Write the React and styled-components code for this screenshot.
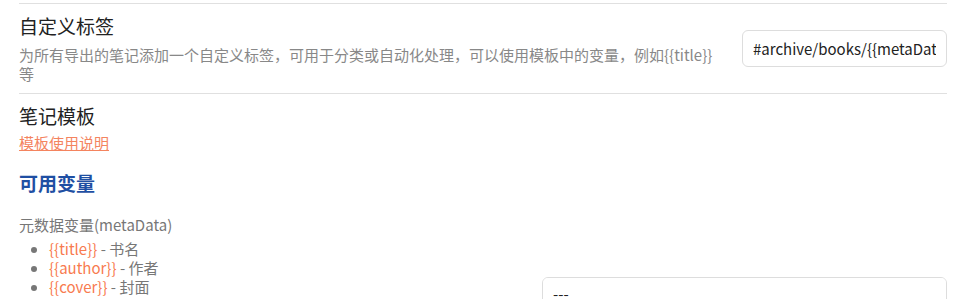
import React from 'react';
import styled, { createGlobalStyle } from 'styled-components';

const GlobalStyle = createGlobalStyle`
	html, body {
		margin: 0;
		background: #fff;
	}
	body {
		font-family: "Noto Sans CJK SC", "Noto Sans", sans-serif;
		font-size: 15px;
		color: #222;
	}
`;

const Page = styled.div`
	padding: 3px 30px 0 19px;
`;

const SettingItem = styled.div`
	display: flex;
	align-items: center;
	padding: 10px 0;
	border-top: 1px solid #e0e0e0;
`;

const Info = styled.div`
	flex: 1 1 auto;
	min-width: 0;
`;

const Control = styled.div`
	flex: 0 0 auto;
	margin-left: 24px;
	display: flex;
`;

const Name = styled.div`
	font-size: 19px;
	line-height: 24px;
	color: #222;
`;

const Description = styled.div`
	margin-top: 7px;
	font-size: 15px;
	line-height: 19px;
	color: #888;
`;

const DocLink = styled.a`
	display: block;
	margin-top: 5px;
	font-size: 15px;
	line-height: 19px;
	color: #f4845f;
	text-decoration: underline;
	width: max-content;
	cursor: pointer;
`;

const Heading = styled.h3`
	margin: 19px 0 0;
	font-size: 19px;
	line-height: 24px;
	font-weight: 700;
	color: #1f4fa3;
`;

const GroupLabel = styled.div`
	margin-top: 20px;
	font-size: 15px;
	line-height: 19px;
	color: #777;
`;

const VarList = styled.ul`
	margin: 5px 0 0;
	padding-left: 30px;
	color: #777;
	font-size: 15px;
	line-height: 19px;
`;

const VarName = styled.span`
	color: #f87b4f;
`;

const TextInput = styled.input`
	box-sizing: border-box;
	width: 205px;
	height: 37px;
	padding: 0 10px;
	border: 1px solid #ddd;
	border-radius: 6px;
	font-family: inherit;
	font-size: 15px;
	color: #222;
	background: #fff;
	outline: none;
`;

const TemplateArea = styled.textarea`
	box-sizing: border-box;
	width: 405px;
	height: 238px;
	padding: 6px 10px;
	border: 1px solid #ddd;
	border-radius: 6px;
	font-family: inherit;
	font-size: 15px;
	line-height: 19px;
	color: #222;
	background: #fff;
	resize: none;
	outline: none;
	overflow-y: scroll;

	&::-webkit-scrollbar {
		width: 12px;
		background: transparent;
	}
	&::-webkit-scrollbar-thumb {
		background: #dedede;
		border-radius: 6px;
		border-style: solid;
		border-color: transparent;
		border-width: 3px 2px 3px 2px;
		background-clip: padding-box;
	}
`;

const groups = [
	{
		label: '元数据变量(metaData)',
		vars: [
			['title', '书名'],
			['author', '作者'],
			['cover', '封面'],
			['intro', '简介'],
			['category', '分类'],
			['publisher', '出版社'],
			['isbn', 'ISBN'],
			['pcUrl', '网页链接'],
			['bookId', '书籍ID'],
			['lastReadDate', '最后阅读日期'],
			['noteCount', '划线数量'],
			['reviewCount', '笔记数量'],
		],
	},
	{
		label: '划线变量(chapterHighlights)',
		vars: [
			['chapterUid', '章节ID'],
			['chapterIdx', '章节序号'],
			['chapterTitle', '章节标题'],
			['level', '章节层级'],
			['highlights', '划线列表'],
		],
	},
	{
		label: '书评变量(bookReview)',
		vars: [
			['chapterReviews', '章节想法'],
			['bookReviews', '全书书评'],
		],
	},
];

const templateText = `---
isbn: {{metaData.isbn}}
lastReadDate: {{metaData.lastReadDate}}
---
# 元数据
> [!abstract] {{metaData.title}}
> - ![ {{metaData.title}}|200]({{metaData.cover}})
> - 书名： {{metaData.title}}
> - 作者： {{metaData.author}}
> - 简介： {{metaData.intro}}
> - 出版时间 {{metaData.publishTime}}
> - ISBN： {{metaData.isbn}}
> - 分类： {{metaData.category}}
> - 出版社： {{metaData.publisher}}

# 高亮划线
{% for chapter in chapterHighlights %}
## {{chapter.chapterTitle}}
{% endfor %}
`;

const App = () => {
	return (
		<Page>
			<GlobalStyle />
			<SettingItem>
				<Info>
					<Name>自定义标签</Name>
					<Description>
						为所有导出的笔记添加一个自定义标签，可用于分类或自动化处理，可以使用模板中的变量，例如{'{{title}}'}<wbr />等
					</Description>
				</Info>
				<Control>
					<TextInput defaultValue="#archive/books/{{metaData.author}}" />
				</Control>
			</SettingItem>
			<SettingItem>
				<Info>
					<Name>笔记模板</Name>
					<DocLink>模板使用说明</DocLink>
					<Heading>可用变量</Heading>
					{groups.map((group) => (
						<div key={group.label}>
							<GroupLabel>{group.label}</GroupLabel>
							<VarList>
								{group.vars.map(([key, text]) => (
									<li key={key}>
										<VarName>{'{{' + key + '}}'}</VarName> - {text}
									</li>
								))}
							</VarList>
						</div>
					))}
				</Info>
				<Control>
					<TemplateArea defaultValue={templateText} spellCheck={false} />
				</Control>
			</SettingItem>
		</Page>
	);
};

export default App;
